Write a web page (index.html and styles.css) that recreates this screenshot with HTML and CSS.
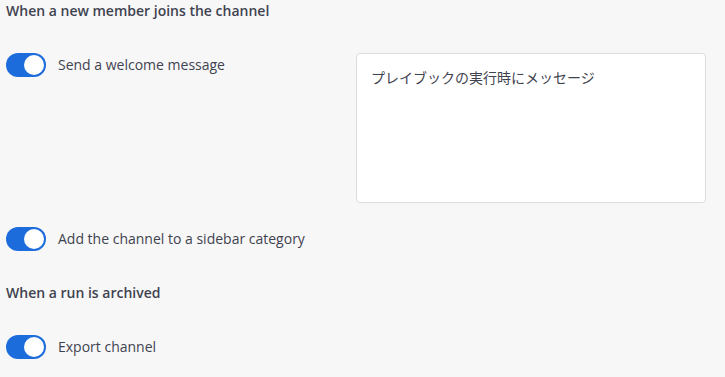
FILE: index.html
```html
<!DOCTYPE html>
<html lang="en">
<head>
<meta charset="utf-8">
<link rel="stylesheet" href="styles.css">
</head>
<body>
<div class="page">
  <h2 class="section-title">When a new member joins the channel</h2>
  <div class="setting with-message">
    <div class="toggle-row">
      <span class="toggle on"><span class="knob"></span></span>
      <span class="label">Send a welcome message</span>
    </div>
    <div class="message-box">プレイブックの実行時にメッセージ</div>
  </div>
  <div class="setting">
    <div class="toggle-row">
      <span class="toggle on"><span class="knob"></span></span>
      <span class="label">Add the channel to a sidebar category</span>
    </div>
  </div>
  <h2 class="section-title">When a run is archived</h2>
  <div class="setting">
    <div class="toggle-row">
      <span class="toggle on"><span class="knob"></span></span>
      <span class="label">Export channel</span>
    </div>
  </div>
</div>
</body>
</html>
```
FILE: styles.css
```css
html, body {
  margin: 0;
  padding: 0;
  background: #f7f7f7;
}
body {
  font-family: "Open Sans", "Noto Sans CJK JP", sans-serif;
  color: #3f4350;
  font-size: 14px;
  line-height: 20px;
}
.page {
  display: flex;
  flex-direction: column;
  padding: 1px 0 0 6px;
}
.section-title {
  margin: 0 0 32px 0;
  font-size: 14px;
  line-height: 20px;
  font-weight: 600;
  color: #3f4350;
}
.setting {
  margin-bottom: 32px;
}
.setting.with-message {
  display: grid;
  grid-template-columns: 350px 350px;
  margin-bottom: 24px;
}
.toggle-row {
  display: flex;
  align-items: center;
  gap: 12px;
  height: 24px;
}
.toggle {
  width: 40px;
  height: 24px;
  border-radius: 12px;
  background: #1c6cdc;
  box-sizing: border-box;
  padding: 2px;
  display: flex;
  justify-content: flex-end;
  flex-shrink: 0;
}
.knob {
  width: 20px;
  height: 20px;
  border-radius: 50%;
  background: #ffffff;
}
.label {
  color: #3f4350;
  line-height: 24px;
}
.message-box {
  height: 150px;
  box-sizing: border-box;
  background: #ffffff;
  border: 1px solid #dcdcdd;
  border-radius: 4px;
  padding: 14px 14px;
  font-family: "Open Sans", "Noto Sans CJK JP", sans-serif;
  font-weight: 400;
  color: #3f4350;
}
```
